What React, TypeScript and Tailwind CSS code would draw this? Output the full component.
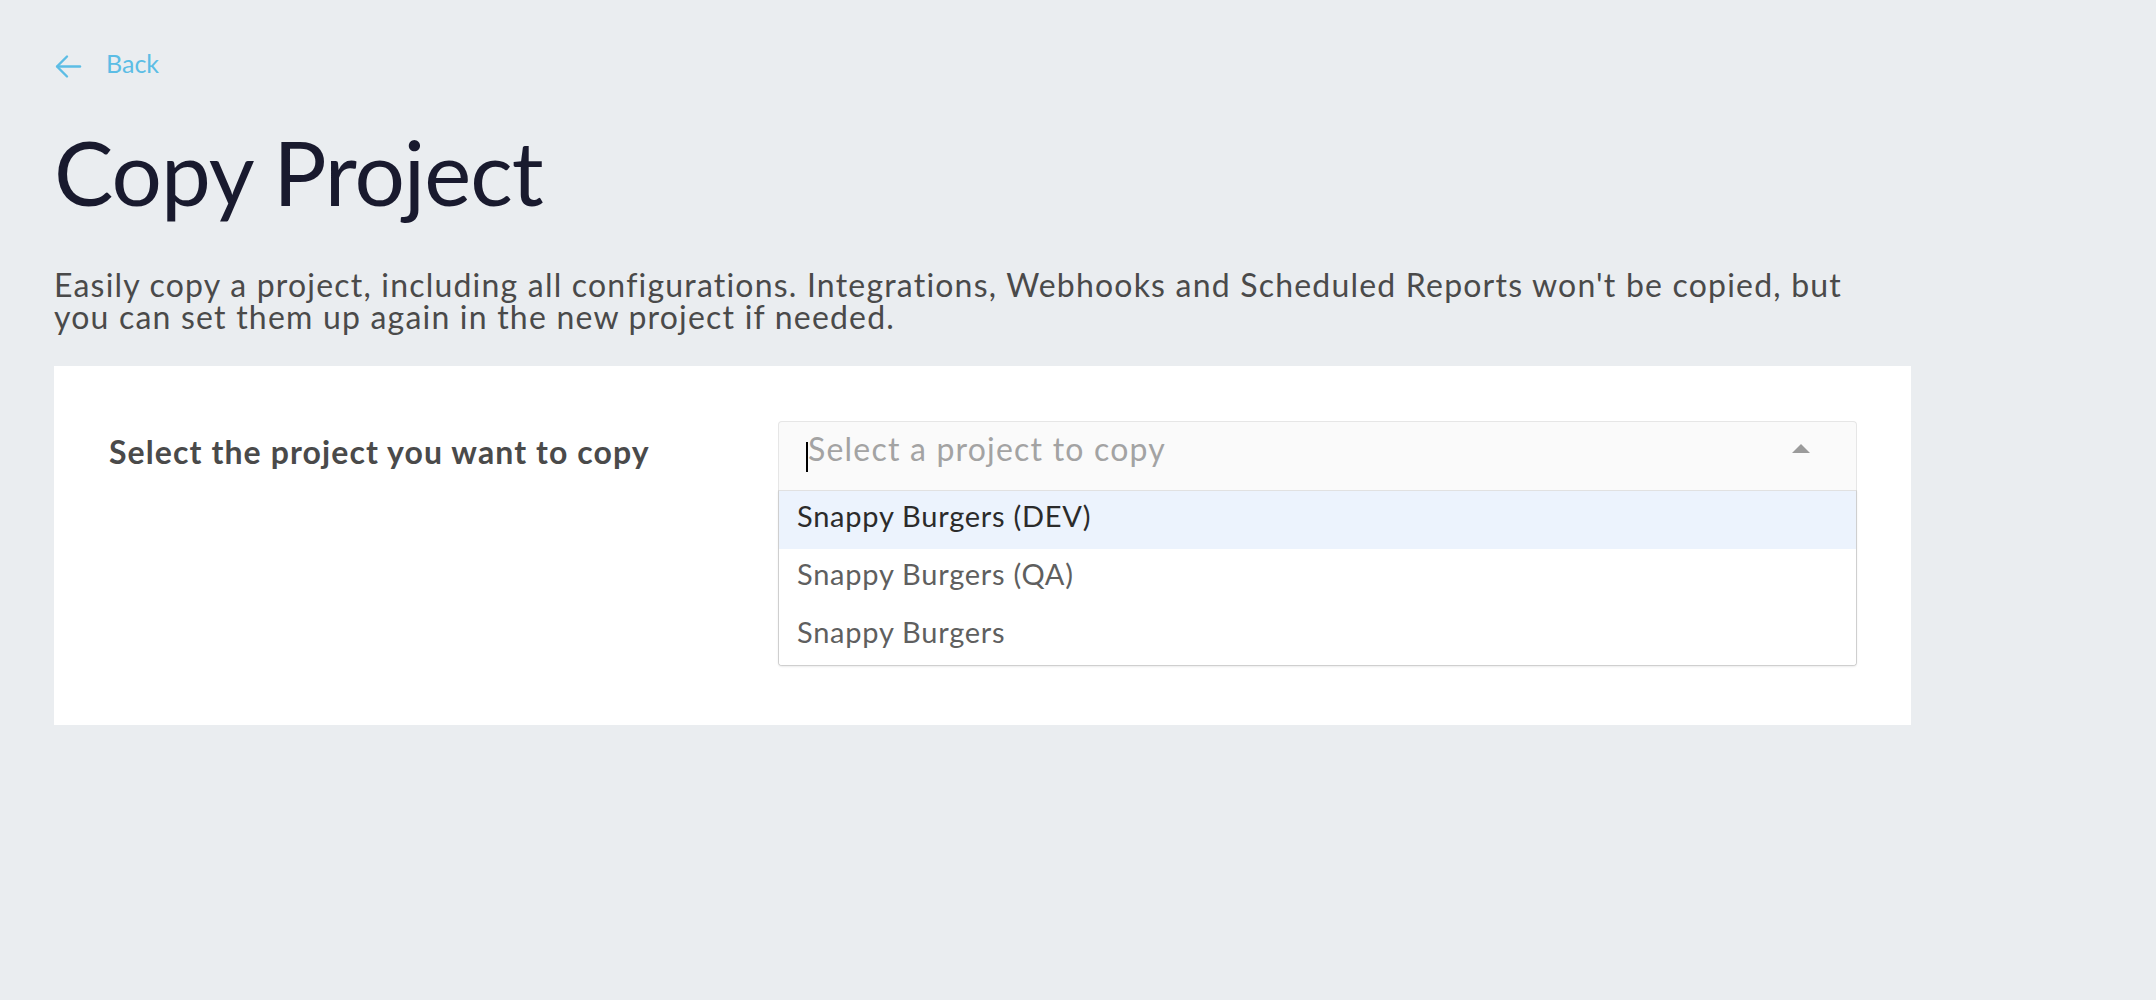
import React from "react";

const font = { fontFamily: "Lato, 'Noto Sans', sans-serif" };

export default function App() {
  const options = ["Snappy Burgers (DEV)", "Snappy Burgers (QA)", "Snappy Burgers"];
  return (
    <div className="min-h-screen w-full bg-[#eaedf0] pt-[51px] pl-[54px]" style={font}>
      <div className="w-[1857px]">
        <a className="flex items-center h-[25px] text-[#5cbde5] text-[25px] leading-[25px] cursor-pointer">
          <svg width="27" height="25" viewBox="0 0 27 25" className="ml-[1px] mt-[6px]" fill="none" stroke="#5cbde5" strokeWidth="2.4" strokeLinecap="round" strokeLinejoin="round">
            <path d="M25 12.5H2.5" />
            <path d="M12 2.5L2 12.5L12 22.5" />
          </svg>
          <span className="ml-[24px]">Back</span>
        </a>

        <h1 className="mt-[51px] text-[89px] leading-[89px] font-normal tracking-[-1px] text-[#191a2e]">Copy Project</h1>

        <p className="mt-[53px] w-[1810px] text-[32px] leading-[32px] tracking-[1.2px] text-[#4a4a4a]">
          Easily copy a project, including all configurations. Integrations, Webhooks and Scheduled Reports won't be copied, but you can set them up again in the new project if needed.
        </p>

        <div className="mt-[33px] bg-white pt-[55px] pl-[55px] pr-[54px] pb-[59px] flex">
          <div className="w-[669px] shrink-0 pt-[15px] text-[32px] leading-[32px] tracking-[1.1px] font-bold text-[#4a4a4a]">
            Select the project you want to copy
          </div>
          <div className="flex-1">
            <div className="relative flex justify-between h-[69px] bg-[#fafafa] border border-b-0 border-[#e6e6e6] rounded-t-[4px]">
              <span className="absolute left-[27px] top-[20px] w-[2px] h-[30px] bg-black" />
              <div className="pl-[29px] pt-[11px] text-[32px] leading-[32px] tracking-[1.2px] text-[#a3a3a3]">Select a project to copy</div>
              <svg width="18" height="9" viewBox="0 0 18 9" className="mt-[22px] mr-[46px]">
                <polygon points="0,9 9,0 18,9" fill="#9b9b9b" />
              </svg>
            </div>
            <div className="border border-[#cfcfcf] border-t-[#e1e1e1] rounded-b-[4px] shadow-[0_1px_2px_rgba(0,0,0,0.08)] bg-white overflow-hidden">
              {options.map((o, i) => (
                <div
                  key={o}
                  className={
                    i === 0
                      ? "h-[58px] pl-[18px] pt-[10px] text-[29px] leading-[29px] tracking-[0.75px] bg-[#ecf3fd] text-[#2b2b2b]"
                      : "h-[58px] pl-[18px] pt-[10px] text-[29px] leading-[29px] tracking-[0.75px] bg-white text-[#5f5f5f]"
                  }
                >
                  {o}
                </div>
              ))}
            </div>
          </div>
        </div>
      </div>
    </div>
  );
}
